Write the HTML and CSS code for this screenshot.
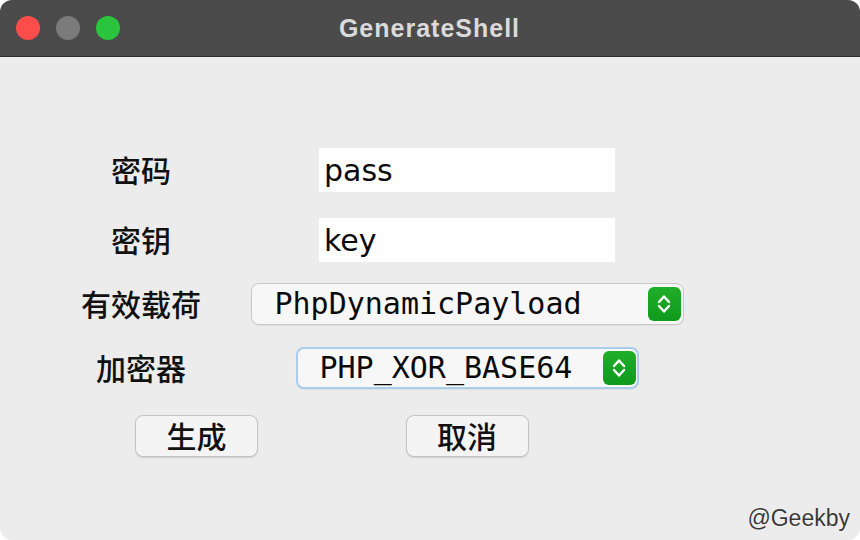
FILE: index.html
```html
<!DOCTYPE html>
<html lang="zh">
<head>
<meta charset="utf-8">
<title>GenerateShell</title>
<link rel="stylesheet" href="styles.css">
</head>
<body>
<div class="window">
  <div class="titlebar">
    <div class="lights">
      <span class="light red"></span>
      <span class="light gray"></span>
      <span class="light green"></span>
    </div>
    <div class="title">GenerateShell</div>
  </div>
  <div class="content">
    <div class="form">
      <div class="label tall">密码</div>
      <div class="field"><input class="text" type="text" value="pass"></div>

      <div class="label tall">密钥</div>
      <div class="field"><input class="text" type="text" value="key"></div>

      <div class="label">有效载荷</div>
      <div class="field">
        <div class="select wide">
          <span class="select-text">PhpDynamicPayload</span>
          <span class="stepper">
            <svg width="16" height="24" viewBox="0 0 16 24"><path d="M3 10 L8 4.5 L13 10 M3 14 L8 19.5 L13 14" fill="none" stroke="#fff" stroke-width="2.4" stroke-linecap="round" stroke-linejoin="round"/></svg>
          </span>
        </div>
      </div>

      <div class="label">加密器</div>
      <div class="field">
        <div class="select narrow focused">
          <span class="select-text">PHP_XOR_BASE64</span>
          <span class="stepper">
            <svg width="16" height="24" viewBox="0 0 16 24"><path d="M3 10 L8 4.5 L13 10 M3 14 L8 19.5 L13 14" fill="none" stroke="#fff" stroke-width="2.4" stroke-linecap="round" stroke-linejoin="round"/></svg>
          </span>
        </div>
      </div>

      <div class="btn-cell left"><button class="btn">生成</button></div>
      <div class="field"><button class="btn">取消</button></div>
    </div>
  </div>
  <div class="watermark">@Geekby</div>
</div>
</body>
</html>
```

FILE: styles.css
```css
html, body {
  margin: 0;
  padding: 0;
  background: #ffffff;
}

.window {
  position: relative;
  width: 860px;
  height: 540px;
  background: #ececec;
  border-radius: 12px;
  overflow: hidden;
  font-family: "Noto Sans CJK SC", "Noto Sans", sans-serif;
}

.titlebar {
  position: relative;
  height: 56px;
  background: #4b4b4b;
  border-bottom: 1px solid #2c2c2c;
  display: flex;
  align-items: center;
  justify-content: center;
}

.lights {
  position: absolute;
  left: 16px;
  top: 16px;
  display: flex;
  gap: 16px;
}

.light {
  width: 24px;
  height: 24px;
  border-radius: 50%;
  display: block;
}

.light.red { background: #fd4d4a; }
.light.gray { background: #7b7b7b; }
.light.green { background: #2bc43e; }

.title {
  font-family: "Liberation Sans", Arial, sans-serif;
  font-weight: bold;
  font-size: 25px;
  letter-spacing: 1px;
  color: #dadada;
  line-height: 1;
  margin-left: -1px;
}

.content {
  padding-top: 91px;
  padding-left: 30px;
}

.form {
  display: grid;
  grid-template-columns: 222px 430px;
  grid-template-rows: 70px 65px 64px 68px 42px;
  align-items: start;
}

.label {
  height: 42px;
  box-sizing: border-box;
  padding-bottom: 3px;
  display: flex;
  align-items: center;
  justify-content: center;
  font-size: 30px;
  font-weight: 500;
  line-height: 1;
  color: #111;
}

.label.tall {
  height: 44px;
}

.field {
  display: flex;
  justify-content: center;
}

.text {
  width: 296px;
  height: 44px;
  box-sizing: border-box;
  border: none;
  outline: none;
  background: #ffffff;
  padding: 0 0 0 5px;
  margin: 0;
  font-family: "DejaVu Sans", sans-serif;
  font-size: 30px;
  color: #0a0a0a;
}

.select {
  flex: none;
  height: 42px;
  box-sizing: border-box;
  border: 1px solid #c9c9c9;
  border-radius: 8px;
  background: #f7f7f7;
  display: flex;
  align-items: center;
  justify-content: space-between;
  padding: 0 2px 0 23px;
  box-shadow: 0 1px 1px rgba(0, 0, 0, 0.06);
}

.select.wide { width: 433px; }
.select.narrow { width: 343px; }

.select.focused {
  border: 2px solid #a9cdea;
  padding: 0 1px 0 22px;
}

.select-text {
  font-family: "DejaVu Sans Mono", monospace;
  font-size: 30px;
  line-height: 1;
  color: #0a0a0a;
}

.stepper {
  width: 33px;
  height: 34px;
  border-radius: 6px;
  background: linear-gradient(#1fae2a, #0f9a1c);
  display: flex;
  align-items: center;
  justify-content: center;
}

.stepper svg {
  display: block;
}

.btn-cell.left {
  display: flex;
  justify-content: flex-end;
  margin-right: -6px;
}

.btn {
  width: 123px;
  height: 42px;
  box-sizing: border-box;
  border: 1px solid #c4c4c4;
  border-radius: 8px;
  background: #f4f4f4;
  box-shadow: 0 1px 1px rgba(0, 0, 0, 0.12);
  font-family: "Noto Sans CJK SC", sans-serif;
  font-size: 30px;
  font-weight: 500;
  line-height: 1;
  color: #111;
  padding: 0 0 3px 0;
  margin: 0;
}

.watermark {
  position: absolute;
  right: 10px;
  bottom: 8px;
  font-family: "Liberation Sans", Arial, sans-serif;
  font-size: 23px;
  color: #3a3a3a;
  text-shadow: 0 0 2px #ffffff;
}
```
